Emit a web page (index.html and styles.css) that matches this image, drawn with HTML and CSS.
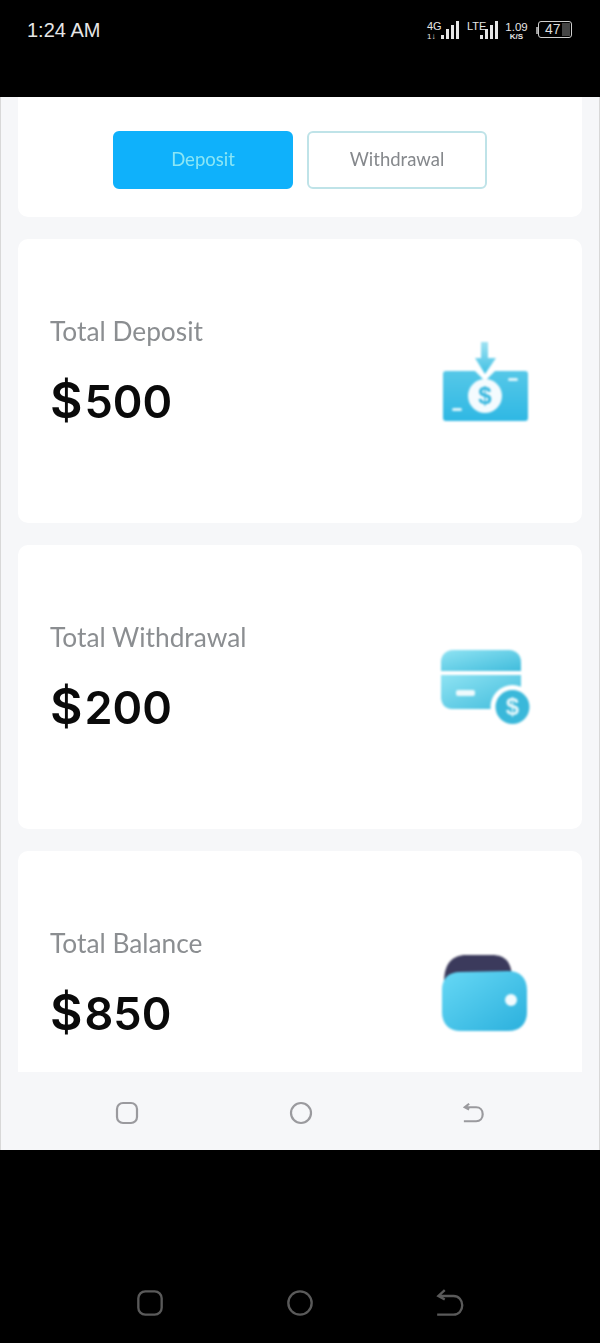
FILE: index.html
```html
<!DOCTYPE html>
<html>
    <head>
        <meta charset="utf-8">
        <title>Wallet</title>
        <link rel="stylesheet" href="styles.css">
    </head>

    <body>
        <div class="status">
            <span class="time">1:24 AM</span>
            <div class="indicators">
                <span class="net"><span>4G</span><span class="arrows">1&#8595;</span></span>
                <svg class="bars" width="18" height="18" viewBox="0 0 18 18"><path d="M0 14h3v4H0zM5 8h3v10H5zM10 4h3v14h-3zM15 0h3v18h-3z"/></svg>
                <span class="lte">LTE</span>
                <svg class="bars bars-lte" width="18" height="18" viewBox="0 0 18 18"><path d="M0 14h3v4H0zM5 8h3v10H5zM10 4h3v14h-3zM15 0h3v18h-3z"/></svg>
                <span class="speed"><span>1.09</span><span class="unit">K/S</span></span>
                <span class="battery-cap"></span>
                <span class="battery"><span class="battery-level"></span><span class="battery-num">47</span></span>
            </div>
        </div>

        <div class="screen">
            <div class="content">
                <div class="card tabs">
                    <button class="tab tab-on">Deposit</button>
                    <button class="tab">Withdrawal</button>
                </div>

                <div class="card stat">
                    <div class="stat-text">
                        <div class="label">Total Deposit</div>
                        <div class="amount"><span class="cur">$</span>500</div>
                    </div>
                    <svg class="ico" width="86" height="82" viewBox="0 0 86 82">
                        <defs>
                            <linearGradient id="g1" x1="0" y1="0" x2="0" y2="1">
                                <stop offset="0" stop-color="#56c8e8"/>
                                <stop offset="1" stop-color="#2fb8e4"/>
                            </linearGradient>
                            <linearGradient id="g1b" x1="0" y1="0" x2="0" y2="1">
                                <stop offset="0" stop-color="#9fe2f2"/>
                                <stop offset="1" stop-color="#3fc0e4"/>
                            </linearGradient>
                        </defs>
                        <rect x="1" y="31" width="85" height="50" rx="3" fill="url(#g1)"/>
                        <path d="M31 29h24L43 41z" fill="#fff"/>
                        <circle cx="43" cy="56" r="17" fill="#f4fbfe"/>
                        <text x="43" y="64" class="ico-dollar" fill="#35b6de">$</text>
                        <rect x="66" y="38" width="10" height="3" rx="1.500" fill="#dff5fb"/>
                        <rect x="10" y="68" width="10" height="3" rx="1.500" fill="#dff5fb"/>
                        <path d="M39 2h7v16h8L43 34 33 18h6z" fill="url(#g1b)"/>
                    </svg>
                </div>

                <div class="card stat">
                    <div class="stat-text">
                        <div class="label">Total Withdrawal</div>
                        <div class="amount"><span class="cur">$</span>200</div>
                    </div>
                    <svg class="ico ico-card" width="90" height="76" viewBox="0 0 90 76">
                        <defs>
                            <linearGradient id="g2" x1="0" y1="0" x2="1" y2="1">
                                <stop offset="0" stop-color="#8fe3f3"/>
                                <stop offset="1" stop-color="#40bcdc"/>
                            </linearGradient>
                        </defs>
                        <path d="M1 22V13C1 6 6 1 13 1h56c7 0 12 5 12 12v9z" fill="url(#g2)"/>
                        <path d="M1 26h80v34H12C5 60 1 55 1 48z" fill="url(#g2)"/>
                        <rect x="16" y="41" width="19" height="6" rx="2" fill="#eefafd"/>
                        <circle cx="72.500" cy="58" r="22" fill="#fff"/>
                        <circle cx="72.500" cy="58" r="17" fill="#3ab8da"/>
                        <text x="72.500" y="66" class="ico-dollar" fill="#e4f7fb">$</text>
                    </svg>
                </div>

                <div class="card stat">
                    <div class="stat-text">
                        <div class="label">Total Balance</div>
                        <div class="amount"><span class="cur">$</span>850</div>
                    </div>
                    <svg class="ico" width="86" height="78" viewBox="0 0 86 78">
                        <defs>
                            <linearGradient id="g3" x1="0" y1="0" x2="1" y2="1">
                                <stop offset="0" stop-color="#66d8f5"/>
                                <stop offset="1" stop-color="#2bb0dd"/>
                            </linearGradient>
                        </defs>
                        <path d="M2 28C2 10 10 1 24 1h26c14 0 20 8 20 24v10H2z" fill="#3b3a5c"/>
                        <path d="M0 36C0 24 7 18 18 18l48-1c12 0 19 7 19 19v22c0 12-7 19-19 19H19C7 77 0 70 0 58z" fill="url(#g3)"/>
                        <circle cx="69" cy="46" r="6" fill="#f2fbfe"/>
                    </svg>
                </div>
            </div>

            <div class="navbar">
                <svg width="24" height="24" viewBox="0 0 24 24" class="nav-ico"><rect x="2" y="2" width="20" height="20" rx="6"/></svg>
                <svg width="24" height="24" viewBox="0 0 24 24" class="nav-ico"><circle cx="12" cy="12" r="10"/></svg>
                <svg width="21" height="21" viewBox="0 0 24 24" class="nav-ico nav-back"><path d="M1 22h14c4.500 0 7.500-3.500 7.500-8s-3-8-7.500-8H2M7 2L2 6l5 2.500"/></svg>
            </div>
        </div>

        <div class="sysnav">
            <svg width="28" height="28" viewBox="0 0 24 24" class="sys-ico"><rect x="2" y="2" width="20" height="20" rx="6"/></svg>
            <svg width="28" height="28" viewBox="0 0 24 24" class="sys-ico"><circle cx="12" cy="12" r="10"/></svg>
            <svg width="28" height="28" viewBox="0 0 24 24" class="sys-ico"><path d="M1 22h14c4.500 0 7.500-3.500 7.500-8s-3-8-7.500-8H2M7.500 1L2 6l5.500 3"/></svg>
        </div>
    </body>
</html>
```

FILE: styles.css
```css
html, body {
    margin: 0;
    height: 1343px;
    overflow: hidden;
    background: #000;
}

body {
    display: flex;
    flex-direction: column;
    font-family: "Lato", "Liberation Sans", sans-serif;
}

/* status bar */
.status {
    height: 97px;
    display: flex;
    justify-content: space-between;
    padding: 19px 28px 0 27px;
    box-sizing: border-box;
    color: #e6e6e6;
}

.time {
    font-family: "Liberation Sans", sans-serif;
    font-size: 20px;
    line-height: 22px;
}

.indicators {
    display: flex;
    align-items: flex-start;
    height: 20px;
    font-family: "Liberation Sans", sans-serif;
    margin-top: 2px;
}

.bars {
    fill: #e6e6e6;
    margin-left: 0;
    margin-right: 8px;
}

.bars-lte {
    margin-left: -5px;
    margin-right: 7px;
}

.net, .speed {
    display: flex;
    flex-direction: column;
    align-items: center;
    font-size: 11px;
    line-height: 11px;
}

.net {
    width: 14px;
    align-items: flex-start;
}

.arrows {
    font-size: 8px;
    line-height: 9px;
}

.lte {
    font-size: 11px;
    line-height: 10px;
    width: 18px;
}

.speed {
    width: 23px;
    font-size: 11.500px;
    line-height: 12px;
}

.unit {
    font-size: 8px;
    line-height: 8px;
    font-weight: 700;
}

.battery-cap {
    width: 2px;
    height: 7px;
    background: #999;
    margin: 6px 0 0 8px;
}

.battery {
    position: relative;
    width: 32px;
    height: 15px;
    border: 1.500px solid #cfcfcf;
    border-radius: 3px;
}

.battery-level {
    position: absolute;
    right: 1px;
    top: 1px;
    bottom: 1px;
    width: 8px;
    background: #444;
}

.battery-num {
    position: absolute;
    left: 6px;
    top: 0;
    font-size: 14px;
    line-height: 15px;
    color: #ddd;
}

/* phone screen */
.screen {
    height: 1053px;
    display: flex;
    flex-direction: column;
    background: #f6f7f9;
    border-left: 1px solid #d8d8d8;
    border-right: 1px solid #d8d8d8;
    box-sizing: border-box;
}

.content {
    flex: 1;
    overflow: hidden;
    padding: 0 17px;
    display: flex;
    flex-direction: column;
    gap: 22px;
    filter: blur(0.5px);
}

.card {
    background: #fff;
    border-radius: 10px;
    flex-shrink: 0;
}

.tabs {
    height: 120px;
    border-radius: 0 0 10px 10px;
    display: flex;
    justify-content: center;
    align-items: flex-start;
    padding-top: 34px;
    gap: 14px;
    box-sizing: border-box;
}

.tab {
    width: 180px;
    height: 58px;
    border: 2px solid #bfe3e8;
    border-radius: 6px;
    background: #fff;
    color: #85888c;
    font-family: "Lato", sans-serif;
    font-size: 18.500px;
    line-height: 20px;
    padding: 0 0 2px;
}

.tab-on {
    background: #0fb1fb;
    border-color: #0fb1fb;
    color: #8be6f5;
}

.stat {
    height: 284px;
    display: flex;
    justify-content: space-between;
    align-items: center;
    padding: 0 54px 0 32px;
    box-sizing: border-box;
}

.stat-text {
    margin-bottom: 19px;
}

.label {
    font-size: 26.300px;
    line-height: 32px;
    color: #8b8e91;
}

.amount {
    font-family: "Inter", sans-serif;
    font-weight: 600;
    font-size: 45px;
    line-height: 54px;
    color: #0a0a0a;
    margin-top: 28px;
}

.cur {
    font-size: 50px;
    line-height: 0;
    margin-right: 2px;
}

.ico {
    flex-shrink: 0;
    filter: blur(0.8px);
}

.ico-card {
    margin-right: -2px;
}

.ico-dollar {
    font-family: "Liberation Sans", sans-serif;
    font-size: 24px;
    font-weight: 700;
    text-anchor: middle;
}

.navbar {
    height: 78px;
    flex-shrink: 0;
    display: flex;
    justify-content: space-between;
    align-items: center;
    padding: 3px 114px 0;
    box-sizing: border-box;
}

.nav-ico {
    fill: none;
    stroke: #9a9a9e;
    stroke-width: 2.200;
}

.nav-back {
    margin-right: 1px;
    stroke-width: 2.500;
}

/* black bar below the screen */
.sysnav {
    flex: 1;
    display: flex;
    justify-content: space-between;
    align-items: center;
    padding: 112px 136px 0;
}

.sys-ico {
    fill: none;
    stroke: #5a5a5a;
    stroke-width: 2;
}
```
